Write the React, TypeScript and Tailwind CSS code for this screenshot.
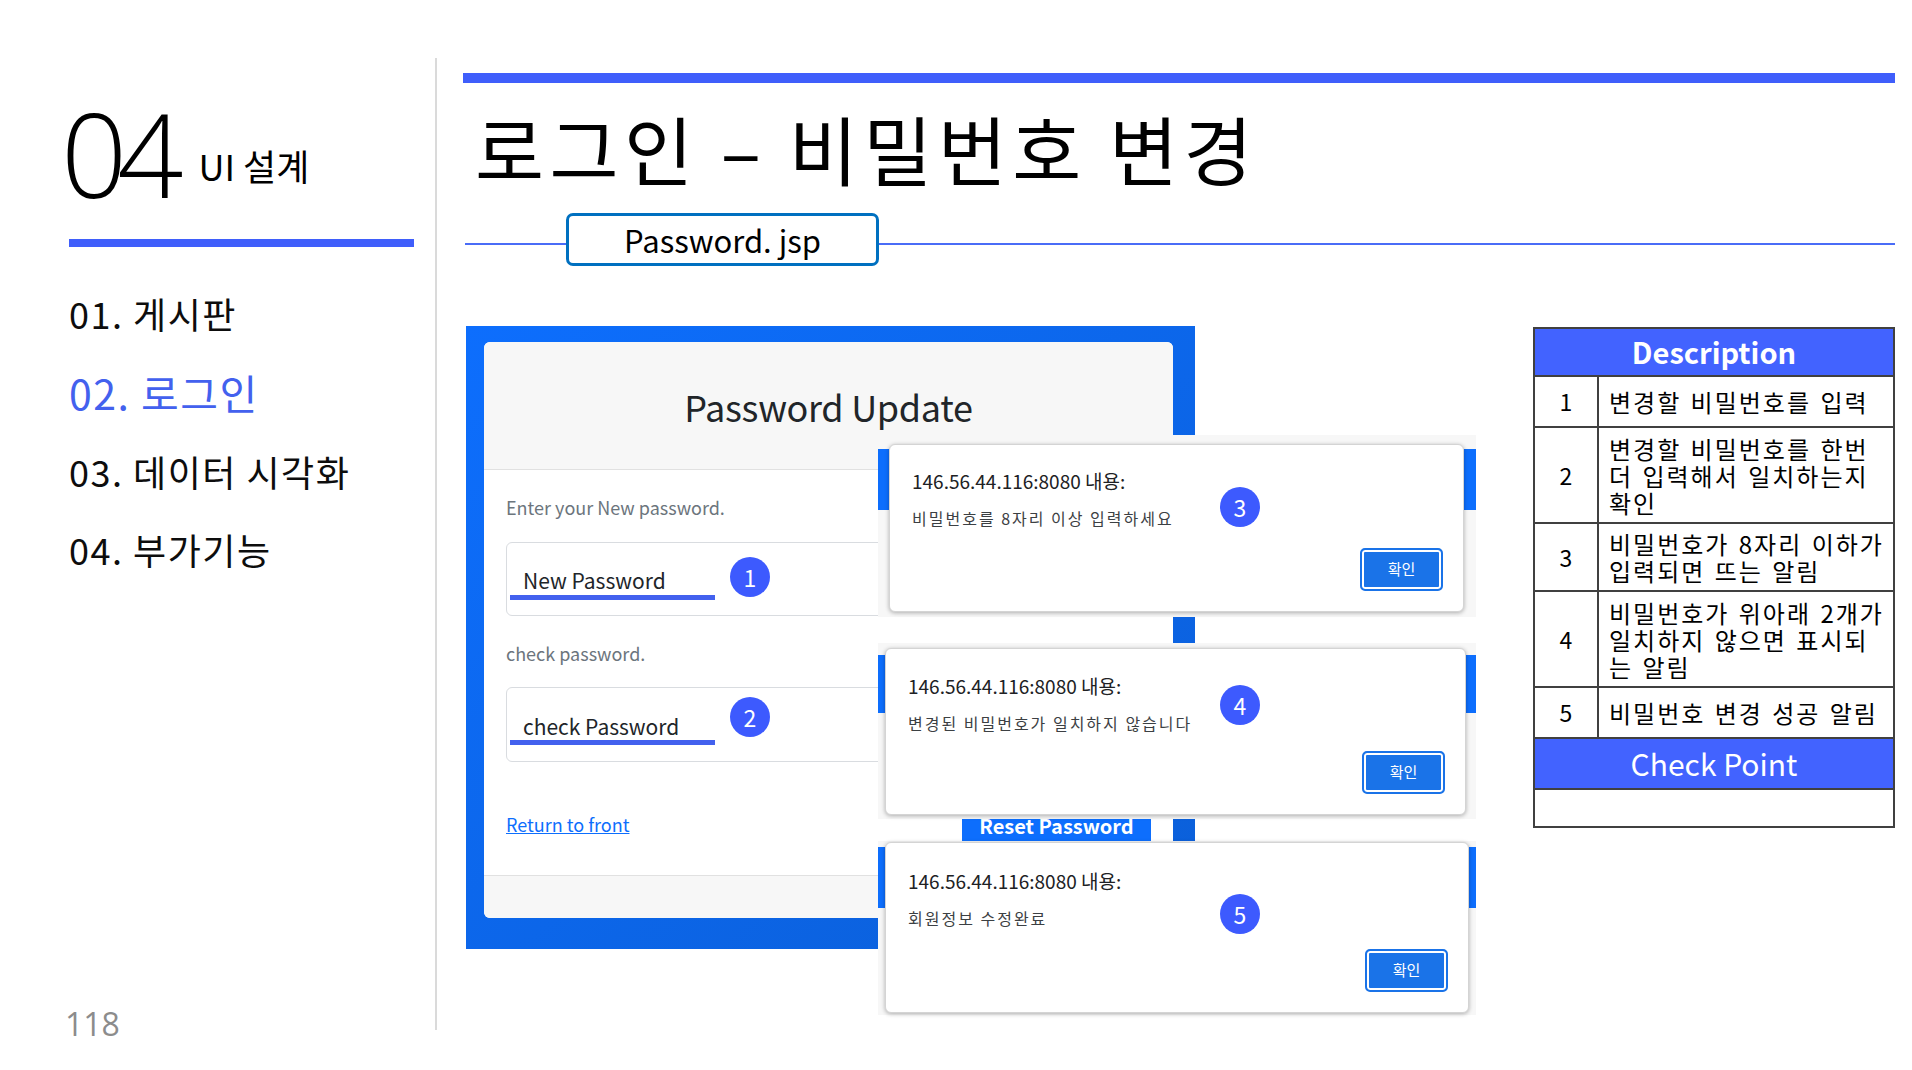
import React from "react";

const KR = "font-['Noto_Sans_CJK_KR',sans-serif]";

type Row = { n: string; h: string; lines: string[] };

const rows: Row[] = [
  { n: "1", h: "h-[51px]", lines: ["변경할 비밀번호를 입력"] },
  { n: "2", h: "h-[96px]", lines: ["변경할 비밀번호를 한번", "더 입력해서 일치하는지", "확인"] },
  { n: "3", h: "h-[68px]", lines: ["비밀번호가 8자리 이하가", "입력되면 뜨는 알림"] },
  { n: "4", h: "h-[96px]", lines: ["비밀번호가 위아래 2개가", "일치하지 않으면 표시되", "는 알림"] },
  { n: "5", h: "h-[51px]", lines: ["비밀번호 변경 성공 알림"] },
];

function Badge({ n, className }: { n: string; className: string }) {
  return (
    <div
      className={`w-[40px] h-[40px] rounded-full bg-[#3d5afe] text-white text-[23px] leading-none flex items-center justify-center ${className}`}
    >
      {n}
    </div>
  );
}

function AlertBox({ message, className }: { message: string; className: string }) {
  return (
    <div
      className={`relative h-full bg-white rounded-[6px] border border-[#d4d4d4] shadow-[0_1px_4px_rgba(0,0,0,0.3)] flex flex-col pl-[22px] ${className}`}
    >
      <p className="text-[19px] leading-[24px] text-[#202124]">146.56.44.116:8080 내용:</p>
      <p className="mt-[14px] text-[16px] leading-[22px] tracking-[2px] text-[#3c4043]">{message}</p>
      <button className="mt-auto self-end mr-[20px] mb-[20px] w-[83px] h-[43px] rounded-[5px] border-2 border-[#1a73e8] bg-[#1a73e8] shadow-[inset_0_0_0_2px_#fff] text-white text-[15px]">
        확인
      </button>
    </div>
  );
}

function PasswordShot() {
  return (
    <div className="relative w-[1010px] h-[690px] ml-[3px]">
      {/* captured page */}
      <div className="w-[729px] h-[623px] bg-gradient-to-br from-[#0d6efd] to-[#0b5fd8] pt-[16px] pl-[18px] pr-[22px] pb-[31px]">
        <div className="w-full h-full bg-white rounded-[6px] overflow-hidden flex flex-col">
          <div className="h-[128px] shrink-0 bg-[#f7f7f7] border-b border-[#e1e1e1] flex items-center justify-center">
            <h2 className="text-[36px] text-[#212529] tracking-[-0.3px]">Password Update</h2>
          </div>
          <div className="flex-1 px-[22px] pt-[25px] flex flex-col">
            <p className="text-[18px] leading-[24px] text-[#6c757d]">Enter your New password.</p>
            <div className="mt-[23px] h-[74px] border border-[#d9dce0] rounded-[6px] flex items-start">
              <div className="mt-[24px] ml-[3px] flex flex-col">
                <span className="pl-[13px] text-[21px] leading-[26px] text-[#212529]">New Password</span>
                <span className="mt-[2px] w-[205px] h-[5px] bg-[#4361ee]"></span>
              </div>
              <Badge n="1" className="mt-[14px] ml-[15px]" />
            </div>
            <p className="mt-[25px] text-[18px] leading-[24px] text-[#6c757d]">check password.</p>
            <div className="mt-[22px] h-[75px] border border-[#d9dce0] rounded-[6px] flex items-start">
              <div className="mt-[25px] ml-[3px] flex flex-col">
                <span className="pl-[13px] text-[21px] leading-[26px] text-[#212529]">check Password</span>
                <span className="mt-[1px] w-[205px] h-[5px] bg-[#4361ee]"></span>
              </div>
              <Badge n="2" className="mt-[9px] ml-[15px]" />
            </div>
            <div className="mt-[38px] flex items-start justify-between">
              <a className="mt-[12px] text-[18px] leading-[24px] text-[#0d6efd] underline">Return to front</a>
              <button className="w-[189px] h-[51px] rounded-[5px] bg-[#0d6efd] text-white font-bold text-[20px]">
                Reset Password
              </button>
            </div>
          </div>
          <div className="h-[43px] shrink-0 bg-[#f7f7f7] border-t border-[#e1e1e1]"></div>
        </div>
      </div>

      {/* alert captures laid over the page */}
      <div className="absolute left-[412px] top-[109px] w-[598px] h-[182px] bg-[#f7f7f7] pl-[11px] pt-[9px] pr-[12px] pb-[5px]">
        <div className="absolute left-0 top-[14px] w-[11px] h-[61px] bg-[#0d6efd]"></div>
        <div className="absolute right-0 top-[14px] w-[12px] h-[61px] bg-[#0d6efd]"></div>
        <AlertBox message="비밀번호를 8자리 이상 입력하세요" className="pt-[24px]" />
      </div>
      <div className="absolute left-[412px] top-[317px] w-[598px] h-[176px] bg-[#f7f7f7] pl-[7px] pt-[5px] pr-[10px] pb-[4px]">
        <div className="absolute left-0 top-[12px] w-[7px] h-[58px] bg-[#0d6efd]"></div>
        <div className="absolute right-0 top-[12px] w-[10px] h-[58px] bg-[#0d6efd]"></div>
        <AlertBox message="변경된 비밀번호가 일치하지 않습니다" className="pt-[25px]" />
      </div>
      <div className="absolute left-[412px] top-[515px] w-[598px] h-[174px] bg-[#f7f7f7] pl-[7px] pt-[1px] pr-[7px] pb-[2px]">
        <div className="absolute left-0 top-[6px] w-[7px] h-[61px] bg-[#0d6efd]"></div>
        <div className="absolute right-0 top-[6px] w-[7px] h-[61px] bg-[#0d6efd]"></div>
        <AlertBox message="회원정보 수정완료" className="pt-[26px]" />
      </div>

      <Badge n="3" className="absolute left-[754px] top-[161px]" />
      <Badge n="4" className="absolute left-[754px] top-[359px]" />
      <Badge n="5" className="absolute left-[754px] top-[568px]" />
    </div>
  );
}

function DescTable() {
  return (
    <div className="mt-[1px] ml-auto w-[362px] border-2 border-[#404040] flex flex-col text-black">
      <div className="h-[48px] bg-[#4263ff] border-b-2 border-[#404040] flex items-center justify-center text-white font-bold text-[29px]">
        Description
      </div>
      {rows.map((r) => (
        <div key={r.n} className={`flex border-b-2 border-[#404040] ${r.h}`}>
          <div className="w-[64px] shrink-0 border-r-2 border-[#404040] flex items-center justify-center text-[23px]">
            {r.n}
          </div>
          <div className="flex-1 flex flex-col justify-center pl-[10px] text-[24px] leading-[27px] tracking-[2px] [word-spacing:2px]">
            {r.lines.map((l) => (
              <span key={l} className="whitespace-nowrap">
                {l}
              </span>
            ))}
          </div>
        </div>
      ))}
      <div className="h-[51px] bg-[#4263ff] border-b-2 border-[#404040] flex items-center justify-center text-white text-[30px]">
        Check Point
      </div>
      <div className="h-[36px]"></div>
    </div>
  );
}

export default function App() {
  const menu = [
    { t: "01. 게시판", c: "h-[78px] text-[36px] text-[#0d0d0d]" },
    { t: "02. 로그인", c: "h-[80px] text-[41px] text-[#4361ee]" },
    { t: "03. 데이터 시각화", c: "h-[78px] text-[36px] text-[#0d0d0d]" },
    { t: "04. 부가기능", c: "h-[78px] text-[36px] text-[#0d0d0d]" },
  ];

  return (
    <div className={`w-[1912px] h-[1070px] bg-white flex overflow-hidden ${KR}`}>
      {/* sidebar */}
      <div className="w-[437px] h-full shrink-0 pt-[58px] pb-[40px]">
        <div className="h-full border-r-2 border-[#dadada] pl-[69px] flex flex-col">
          <div className="mt-[37px] flex items-start">
            <span className="-ml-[8px] font-['Open_Sans',sans-serif] font-light text-[116px] leading-none tracking-[-10px] text-black">
              04
            </span>
            <span className="ml-[25px] mt-[52px] text-[36px] leading-none text-black">UI 설계</span>
          </div>
          <div className="mt-[28px] w-[345px] h-[8px] bg-[#3f5efb]"></div>
          <div className="mt-[27px] flex flex-col">
            {menu.map((m) => (
              <div key={m.t} className={`flex items-center leading-none tracking-[1.5px] ${m.c}`}>
                {m.t}
              </div>
            ))}
          </div>
          <div className="mt-auto -mb-[10px] -ml-[4px] font-['Open_Sans',sans-serif] text-[32px] leading-none text-[#8c8c8c]">
            118
          </div>
        </div>
      </div>

      {/* main */}
      <div className="flex-1 flex flex-col pl-[26px] pr-[17px] pt-[73px]">
        <div className="h-[10px] bg-[#3f5efb]"></div>
        <h1 className="mt-[27px] ml-[12px] text-[75px] leading-none tracking-[5.5px] text-black">로그인 – 비밀번호 변경</h1>
        <div className="mt-[28px] flex items-start">
          <div className="ml-[2px] mt-[30px] w-[101px] h-[2px] bg-[#4a6cf7]"></div>
          <div className="w-[313px] h-[53px] border-[3px] border-[#0070c0] rounded-[7px] flex items-center justify-center text-[31px] leading-none text-black">
            Password. jsp
          </div>
          <div className="mt-[30px] flex-1 h-[2px] bg-[#4a6cf7]"></div>
        </div>
        <div className="mt-[60px] flex items-start">
          <PasswordShot />
          <DescTable />
        </div>
      </div>
    </div>
  );
}
